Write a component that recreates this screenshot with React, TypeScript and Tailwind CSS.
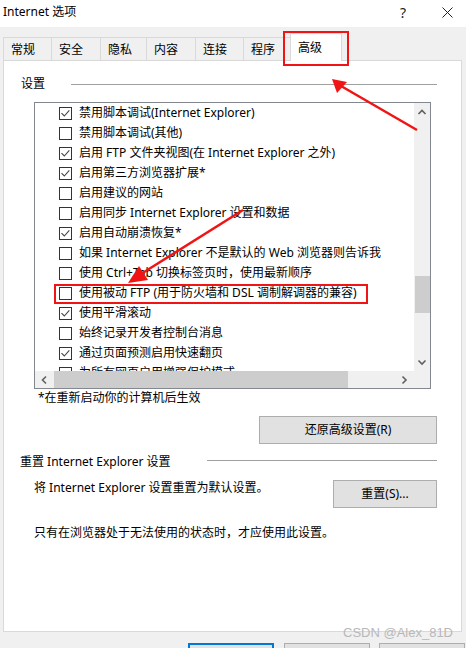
import React from "react";

const font = "font-['Noto_Sans','Noto_Sans_CJK_SC',sans-serif]";

const rows: [string, boolean][] = [
  ["禁用脚本调试(Internet Explorer)", true],
  ["禁用脚本调试(其他)", false],
  ["启用 FTP 文件夹视图(在 Internet Explorer 之外)", true],
  ["启用第三方浏览器扩展*", true],
  ["启用建议的网站", false],
  ["启用同步 Internet Explorer 设置和数据", false],
  ["启用自动崩溃恢复*", true],
  ["如果 Internet Explorer 不是默认的 Web 浏览器则告诉我", false],
  ["使用 Ctrl+Tab 切换标签页时，使用最新顺序", false],
  ["使用被动 FTP (用于防火墙和 DSL 调制解调器的兼容)", false],
  ["使用平滑滚动", true],
  ["始终记录开发者控制台消息", false],
  ["通过页面预测启用快速翻页", true],
  ["为所有网页启用增强保护模式", false],
];

const tabs: [string, string][] = [
  ["常规", "w-[48px]"],
  ["安全", "w-[49px]"],
  ["隐私", "w-[46px]"],
  ["内容", "w-[49px]"],
  ["连接", "w-[48px]"],
  ["程序", "w-[47px]"],
];

function CheckBox({ checked }: { checked: boolean }) {
  return (
    <svg width="13" height="13" viewBox="0 0 13 13" className="shrink-0">
      <rect x="0.5" y="0.5" width="12" height="12" fill="white" stroke="#333" />
      {checked && <path d="M2.5 6.2l2.8 2.8 5-5.6" fill="none" stroke="#444" strokeWidth="1.1" />}
    </svg>
  );
}

function Chevron({ dir }: { dir: "up" | "down" | "left" | "right" }) {
  const d = {
    up: "M1.5 6l3.5-3.5 3.5 3.5",
    down: "M1.5 3.5l3.5 3.5 3.5-3.5",
    left: "M6 1.5l-3.5 3.5 3.5 3.5",
    right: "M3.5 1.5l3.5 3.5-3.5 3.5",
  }[dir];
  return (
    <svg width="10" height="10" viewBox="0 0 10 10">
      <path d={d} fill="none" stroke="#606060" strokeWidth="1.6" />
    </svg>
  );
}

function Btn({ label, className }: { label: string; className: string }) {
  return (
    <div className={`flex items-center justify-center bg-[#e1e1e1] border border-[#adadad] text-[12px] text-black ${className}`}>
      {label}
    </div>
  );
}

export default function App() {
  return (
    <div className={`relative w-[466px] h-[648px] overflow-hidden bg-[#f0f0f0] text-black ${font}`}>
      {/* title bar */}
      <div className="h-[27px] bg-white flex items-center pb-[3px]">
        <span className="pl-[3px] text-[12px]">Internet 选项</span>
        <span className="ml-auto mr-[36px] text-[14px] text-[#222]">?</span>
        <svg width="11" height="11" viewBox="0 0 11 11" className="mr-[13px]">
          <path d="M0.5 0.5l10 10M10.5 0.5l-10 10" stroke="#222" strokeWidth="1" />
        </svg>
      </div>

      {/* tabs */}
      <div className="h-[33px] flex items-end pl-[3px]">
        {tabs.map(([t, w]) => (
          <div key={t} className={`${w} h-[23px] border-l border-t border-[#d9d9d9] flex items-center pl-[7px] pt-[2px] text-[12px]`}>
            {t}
          </div>
        ))}
        <div className="relative z-10 -mb-px w-[52px] h-[28px] bg-white border-l border-t border-r border-[#d9d9d9] flex items-center pl-[7px] text-[12px]">
          高级
        </div>
      </div>

      {/* panel */}
      <div className="ml-[3px] w-[459px] h-[572px] bg-white border border-[#d9d9d9] flex flex-col">
        <div className="mt-[15px] h-[16px] flex items-center pl-[17px] pr-[24px]">
          <span className="w-[50px] text-[12px]">设置</span>
          <div className="flex-1 h-px bg-[#a0a0a0]" />
        </div>

        {/* list box */}
        <div className="mt-[10px] ml-[30px] w-[397px] h-[287px] border border-[#828790] flex flex-col">
          <div className="flex h-[268px]">
            <div className="flex-1 overflow-hidden pt-[0px]">
              {rows.map(([t, c]) => (
                <div key={t} className="h-[20px] flex items-center gap-[7px] pl-[24px] whitespace-nowrap text-[12px]">
                  <CheckBox checked={c} />
                  <span>{t}</span>
                </div>
              ))}
            </div>
            <div className="w-[16px] bg-[#f0f0f0] flex flex-col items-center">
              <div className="mt-[5px]"><Chevron dir="up" /></div>
              <div className="mt-[158px] w-[15px] h-[37px] bg-[#cdcdcd]" />
              <div className="mt-[44px]"><Chevron dir="down" /></div>
            </div>
          </div>
          <div className="flex-1 bg-[#f0f0f0] flex items-center">
            <div className="ml-[5px]"><Chevron dir="left" /></div>
            <div className="ml-[4px] w-[294px] h-[17px] bg-[#cdcdcd]" />
            <div className="ml-[51px]"><Chevron dir="right" /></div>
          </div>
        </div>

        <div className="mt-[1px] ml-[34px] h-[16px] flex items-center text-[12px]">*在重新启动你的计算机后生效</div>

        <div className="mt-[10px] flex justify-end pr-[24px]">
          <Btn label="还原高级设置(R)" className="w-[178px] h-[28px]" />
        </div>

        <div className="mt-[10px] h-[16px] flex items-center pl-[16px] pr-[24px]">
          <span className="w-[187px] text-[12px] whitespace-nowrap">重置 Internet Explorer 设置</span>
          <div className="flex-1 h-px bg-[#a0a0a0] -mt-[4px]" />
        </div>

        <div className="mt-[10px] flex items-start pl-[30px] pr-[24px]">
          <span className="h-[16px] flex items-center text-[12px] whitespace-nowrap">将 Internet Explorer 设置重置为默认设置。</span>
          <Btn label="重置(S)..." className="ml-auto w-[104px] h-[28px]" />
        </div>

        <div className="mt-[17px] ml-[30px] h-[16px] flex items-center text-[12px]">只有在浏览器处于无法使用的状态时，才应使用此设置。</div>
      </div>

      {/* dialog buttons */}
      <div className="mt-[11px] flex pl-[188px] gap-[10px]">
        <div className="w-[86px] h-[23px] bg-[#e1e1e1] border-2 border-[#0078d7]" />
        <div className="w-[86px] h-[23px] bg-[#e1e1e1] border border-[#adadad]" />
        <div className="-ml-[1px] w-[86px] h-[23px] bg-[#e1e1e1] border border-[#adadad]" />
      </div>

      {/* annotations */}
      <svg className="absolute inset-0 pointer-events-none" width="466" height="648" viewBox="0 0 466 648">
        <rect x="284" y="32" width="64" height="33" fill="none" stroke="#f01414" strokeWidth="2" />
        <rect x="55" y="285" width="312" height="18" fill="none" stroke="#f01414" strokeWidth="2" />
        <line x1="417" y1="130" x2="341" y2="86" stroke="#f01414" strokeWidth="2.5" />
        <polygon points="332,79 347,82 337,93" fill="#f01414" />
        <line x1="243" y1="210" x2="141" y2="274" stroke="#f01414" strokeWidth="2.5" />
        <polygon points="128,283 139,266 148,280" fill="#f01414" />
      </svg>

      <div className="absolute left-[343px] top-[623px] text-[13px] font-['Liberation_Sans',sans-serif] text-[#b8b8b8] whitespace-nowrap">
        CSDN @Alex_81D
      </div>
    </div>
  );
}
